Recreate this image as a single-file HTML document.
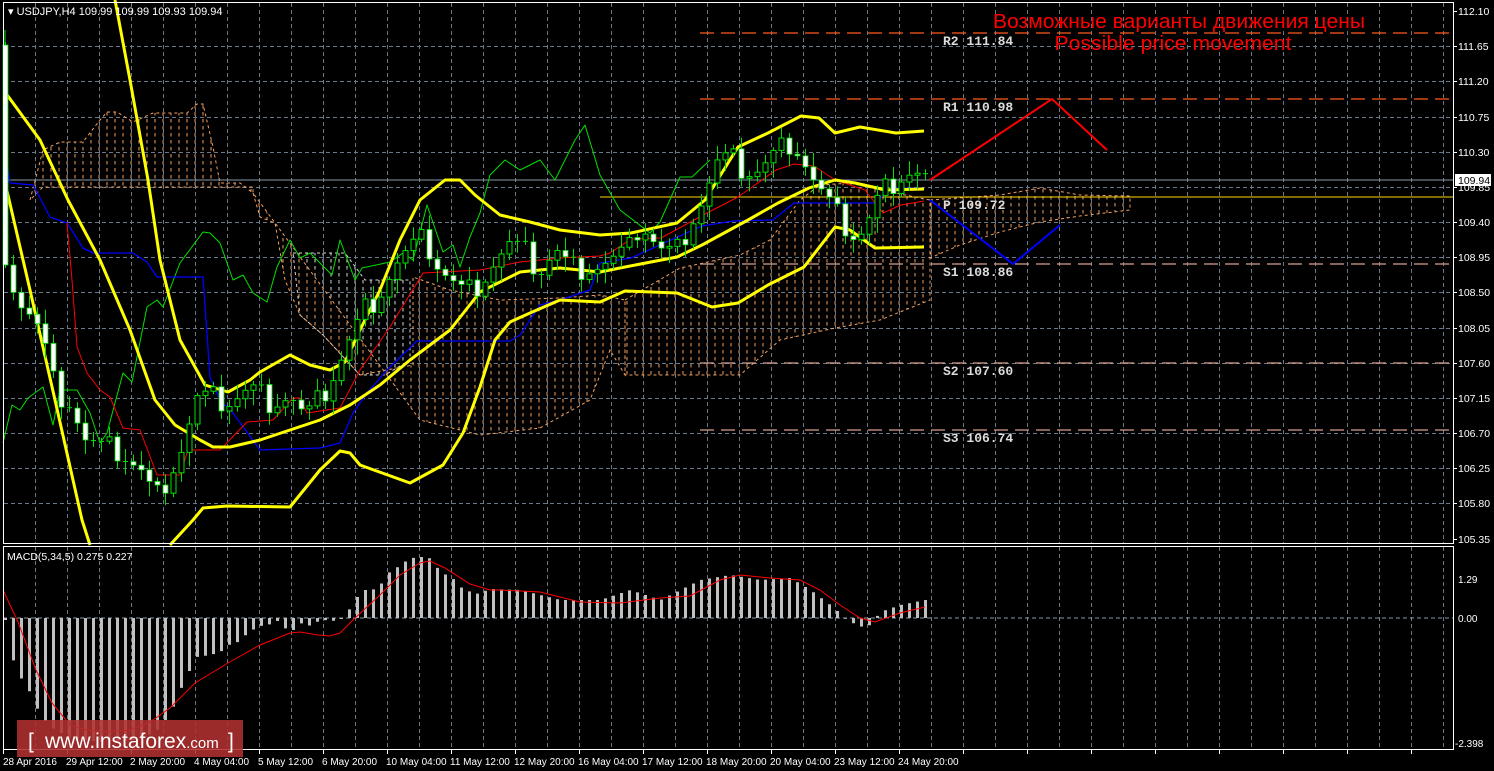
<!DOCTYPE html>
<html><head><meta charset="utf-8"><style>
html,body{margin:0;padding:0;background:#000;width:1494px;height:771px;overflow:hidden}
svg{display:block}
text{font-family:"Liberation Sans",sans-serif}
text.mono{font-family:"Liberation Mono",monospace}
</style></head><body>
<svg id="s" width="1494" height="771" viewBox="0 0 1494 771" xmlns="http://www.w3.org/2000/svg">
<defs>
<pattern id="ho" width="8" height="7" patternUnits="userSpaceOnUse"><line x1="3" y1="0" x2="3" y2="3.5" stroke="#f0a060" stroke-width="1"/></pattern>
<pattern id="hw" width="8" height="7" patternUnits="userSpaceOnUse"><line x1="3" y1="0" x2="3" y2="3.5" stroke="#d8d8d8" stroke-width="1"/></pattern>
</defs>
<rect width="1494" height="771" fill="#000"/>
<g id="grid" stroke="#6b7888" stroke-width="1" stroke-dasharray="4,3"></g>
<g stroke-dasharray="3,3" stroke-width="1">
<polygon fill="url(#ho)" stroke="#f0a060" points="30,200 43,150 60,142 83,142 100,120 107,112 117,112 133,122 153,113 187,113 197,104 203,104 213,147 220,183 240,183 253,193 253,187 43,187"/>
<polygon fill="url(#hw)" stroke="#d8d8d8" points="293,253 345,253 365,280 410,280 410,360 385,375 360,375 323,335 300,315"/>
<polygon fill="url(#ho)" stroke="#f0a060" points="253,193 260,217 275,223 285,280 300,315 323,335 360,375 413,365 413,277 450,290 500,300 560,298 600,295 625,300 625,375 610,350 590,400 540,428 480,435 440,425 420,420"/>
<polygon fill="url(#ho)" stroke="#f0a060" points="625,300 680,268 740,255 770,240 800,200 820,185 850,183 880,190 930,200 930,300 880,320 835,328 780,340 740,375 625,375"/>
<polygon fill="url(#ho)" stroke="#f0a060" points="930,200 1000,195 1040,188 1080,195 1130,196 1130,210 1080,216 1040,222 1000,232 960,245 930,258"/>
</g>
<g stroke-width="1.3" stroke-dasharray="14,7">
<line x1="700" y1="33" x2="1453" y2="33" stroke="#ff5a1e"/>
<line x1="700" y1="99" x2="1453" y2="99" stroke="#ff5a1e"/>
<line x1="700" y1="264" x2="1453" y2="264" stroke="#d8a090"/>
<line x1="700" y1="363" x2="1453" y2="363" stroke="#d8a090"/>
<line x1="700" y1="430" x2="1453" y2="430" stroke="#d8a090"/>
</g>
<line x1="3" y1="180" x2="1453" y2="180" stroke="#8898a8" stroke-width="1"/>
<line x1="600" y1="197" x2="1453" y2="197" stroke="#ffd700" stroke-width="1"/>
<g font-size="13" fill="#dcdcdc" font-weight="bold">
<text class="mono" x="943" y="45">R2 111.84</text>
<text class="mono" x="943" y="111">R1 110.98</text>
<text class="mono" x="943" y="209">P 109.72</text>
<text class="mono" x="943" y="276">S1 108.86</text>
<text class="mono" x="943" y="375">S2 107.60</text>
<text class="mono" x="943" y="442">S3 106.74</text>
</g>
<g fill="none" stroke-linejoin="round">
<polyline stroke="#00e000" stroke-width="1" points="3,443 12,405 20,410 28,398 43,387 53,425 60,390 77,390 90,413 100,443 107,433 123,373 132,382 147,307 157,300 163,307 180,263 203,232 210,233 220,243 233,280 243,275 253,293 267,302 277,267 290,240 300,258 310,253 332,275 340,240 355,280 362,268 390,262 403,253 413,260 427,205 443,252 453,245 460,267 470,237 480,213 490,175 505,160 520,170 540,160 555,180 575,140 585,125 600,175 620,210 650,233 660,222 680,177 692,177 710,160"/>
<polyline stroke="#00e000" stroke-width="1" points="5,30 5,45"/>
<polyline stroke="#0000ff" stroke-width="1.3" points="5,150 10,183 33,185 50,217 67,223 83,248 93,253 133,253 147,262 157,277 203,277 210,377 220,400 233,413 260,450 320,448 340,443 353,413 367,393 387,370 417,341 480,341 510,341 520,335 540,305 560,300 590,290 600,263 631,258 702,226 733,221 773,220 794,203 875,203 891,188 924,188"/>
<polyline stroke="#ff0000" stroke-width="1" points="67,223 72,280 77,347 87,373 100,390 110,397 123,428 140,430 157,475 180,475 188,450 220,450 247,422 273,420 293,398 300,398 307,413 340,408 360,370 390,327 423,273 480,270 520,262 560,258 600,256 610,253 631,239 661,238 707,213 738,197 776,170 794,164 814,166 835,180 865,190 883,213 901,205 924,201"/>
<polyline stroke="#ffff00" stroke-width="3" points="115,0 130,80 148,180 160,260 180,340 205,385 228,392 250,380 260,372 290,355 310,365 330,370 345,362 360,330 380,290 400,240 420,200 445,180 460,180 475,195 500,215 530,222 560,230 600,235 631,233 677,223 705,200 738,147 768,133 801,116 819,118 835,133 860,127 896,133 924,131"/>
<polyline stroke="#ffff00" stroke-width="3" points="5,92 40,140 68,200 100,260 130,330 155,400 175,425 200,440 213,447 230,447 260,440 290,430 320,420 350,405 380,385 410,360 450,330 480,292 520,272 560,268 600,272 625,267 677,257 702,245 748,220 778,203 809,188 835,180 855,183 886,190 924,189"/>
<polyline stroke="#ffff00" stroke-width="3" points="4,178 30,290 55,400 82,520 90,545"/>
<polyline stroke="#ffff00" stroke-width="3" points="170,545 193,520 203,508 227,506 290,507 320,470 340,451 350,453 360,465 410,483 443,465 463,433 480,387 495,340 510,322 530,313 560,300 600,302 625,291 677,293 712,307 738,303 768,285 804,267 835,227 850,230 875,248 924,247"/>
</g>
<g id="candles"></g>
<polyline fill="none" stroke="#ff0000" stroke-width="2" points="930,180 1052,99 1107,150"/>
<polyline fill="none" stroke="#0000ff" stroke-width="2" points="930,200 1013,264 1060,225"/>
<text x="1179" y="28" font-size="20" fill="#ff0000" text-anchor="middle" textLength="372" lengthAdjust="spacingAndGlyphs">Возможные варианты движения цены</text>
<text x="1173" y="50" font-size="20" fill="#ff0000" text-anchor="middle" textLength="237" lengthAdjust="spacingAndGlyphs">Possible price movement</text>
<line x1="3" y1="618" x2="1453" y2="618" stroke="#8898a8" stroke-dasharray="4,3"/>
<g id="macd"></g>
<polyline fill="none" stroke="#ff0000" stroke-width="1" points="3,590 18,622 36,670 52,703 70,725 78,728 100,732 130,730 150,722 170,708 195,683 228,663 260,645 290,633 300,632 318,635 330,636 340,633 355,618 380,595 400,575 420,563 430,561 445,568 470,584 490,590 500,590 540,592 580,602 620,603 660,598 690,596 720,580 740,575 770,578 800,580 820,590 840,605 860,618 875,622 900,613 925,607"/>
<g stroke="#fff" stroke-width="1" fill="none">
<rect x="3.5" y="2.5" width="1450" height="541"/>
<rect x="3.5" y="546.5" width="1450" height="203"/>
</g>
<g id="axis" font-size="10.5" fill="#fff"></g>
<rect x="1455" y="174" width="36" height="12" fill="#fff"/>
<text x="1458" y="184" font-size="10.5" fill="#000">109.94</text>
<text x="1458" y="583" font-size="10" fill="#fff">1.29</text>
<text x="1458" y="622" font-size="10" fill="#fff">0.00</text>
<text x="1455" y="747" font-size="10" fill="#fff">-2.398</text>
<text x="8" y="15" font-size="11" fill="#fff">▾ USDJPY,H4  109.99 109.99 109.93 109.94</text>
<text x="7" y="560" font-size="10.5" fill="#fff">MACD(5,34,5) 0.275 0.227</text>
<g font-size="10" fill="#fff">
<text x="3" y="765">28 Apr 2016</text><text x="66" y="765">29 Apr 12:00</text><text x="130" y="765">2 May 20:00</text><text x="194" y="765">4 May 04:00</text><text x="258" y="765">5 May 12:00</text><text x="322" y="765">6 May 20:00</text><text x="386" y="765">10 May 04:00</text><text x="450" y="765">11 May 12:00</text><text x="514" y="765">12 May 20:00</text><text x="578" y="765">16 May 04:00</text><text x="642" y="765">17 May 12:00</text><text x="706" y="765">18 May 20:00</text><text x="770" y="765">20 May 04:00</text><text x="834" y="765">23 May 12:00</text><text x="898" y="765">24 May 20:00</text>
</g>
<g id="ticks" stroke="#fff"></g>
<rect x="17" y="720" width="226" height="37" fill="#b03030" fill-opacity="0.88"/>
<text x="28" y="748" font-size="21" fill="#fff">[</text>
<text x="45" y="748" font-size="21" fill="#fff">www.instaforex<tspan font-size="15">.com</tspan></text>
<text x="228" y="748" font-size="21" fill="#fff">]</text>
</svg>
<script>
(function(){
var NS="http://www.w3.org/2000/svg";
function el(p,t,a){var e=document.createElementNS(NS,t);for(var k in a)e.setAttribute(k,a[k]);p.appendChild(e);return e;}
function interp(P,x){if(x<=P[0][0])return P[0][1];for(var i=1;i<P.length;i++){if(x<=P[i][0]){var a=P[i-1],b=P[i];return a[1]+(b[1]-a[1])*(x-a[0])/(b[0]-a[0]);}}return P[P.length-1][1];}
var g=document.getElementById('grid');
for(var x=35;x<1453;x+=32){el(g,'line',{x1:x+.5,y1:3,x2:x+.5,y2:543});el(g,'line',{x1:x+.5,y1:547,x2:x+.5,y2:749});}
var ax=document.getElementById('axis');
var tk=document.getElementById('ticks');
var labs=["112.10","111.65","111.20","110.75","110.30","109.85","109.40","108.95","108.50","108.05","107.60","107.15","106.70","106.25","105.80","105.35"];
for(var i=0;i<16;i++){var y=Math.round(11+35.17*i);if(i>0&&i<15)el(g,'line',{x1:4,y1:y+.5,x2:1453,y2:y+.5});el(tk,'line',{x1:1453,y1:y+.5,x2:1457,y2:y+.5});var t=el(ax,'text',{x:1458,y:y+4});t.textContent=labs[i];}
for(var x=3;x<1453;x+=64)el(tk,'line',{x1:x+.5,y1:750,x2:x+.5,y2:754});
var C=[[5,260],[20,300],[35,320],[45,350],[55,390],[70,400],[85,440],[100,450],[120,450],[140,470],[155,500],[170,470],[185,440],[195,400],[210,400],[230,400],[250,390],[270,400],[290,395],[305,420],[320,400],[335,370],[350,340],[365,310],[380,290],[395,265],[410,250],[425,240],[435,260],[450,280],[465,295],[480,280],[495,260],[510,245],[525,255],[540,270],[555,250],[570,270],[585,265],[600,265],[615,260],[630,250],[640,220],[650,235],[660,250],[675,255],[690,220],[705,195],[715,165],[730,160],[745,170],[760,170],[775,155],[790,140],[800,150],[810,175],[825,200],[835,215],[845,225],[855,235],[865,230],[875,205],[885,190],[895,178],[905,170],[915,172],[925,178]];
var cg=document.getElementById('candles');
var prev=45;
for(var i=0;i<116;i++){var x=5+8*i;if(x>926)break;
var c=interp(C,x)+(((i*37)%13)-6)*2.2;if(i==0)c=265;
var o=prev;var tp=Math.min(o,c),bt=Math.max(o,c);
var hi=tp-(3+(i*7)%12),lo=bt+(3+(i*5)%13);
el(cg,'line',{x1:x+.5,y1:hi,x2:x+.5,y2:lo,stroke:'#00e000','stroke-width':1});
if(bt-tp<1.5){el(cg,'line',{x1:x-2,y1:tp+.5,x2:x+3,y2:tp+.5,stroke:'#00e000'});}
else if(c>o){el(cg,'rect',{x:x-2,y:tp,width:5,height:bt-tp,fill:'#fff',stroke:'#00e000','stroke-width':0.8});}
else{el(cg,'rect',{x:x-2,y:tp,width:5,height:bt-tp,fill:'#000',stroke:'#00e000','stroke-width':1});}
prev=c;}
var M=[[5,620],[12,658],[20,677],[28,689],[36,707],[44,720],[52,728],[70,738],[100,742],[140,740],[160,728],[172,709],[180,690],[188,673],[196,657],[210,655],[220,652],[228,645],[236,643],[244,636],[252,630],[260,626],[268,625],[276,620],[284,628],[292,631],[300,623],[308,626],[316,622],[324,620],[332,621],[340,619],[348,611],[356,598],[364,590],[372,590],[380,585],[388,573],[396,568],[404,562],[412,558],[420,557],[428,557],[436,567],[444,574],[452,578],[460,587],[468,591],[476,594],[484,591],[492,589],[520,590],[560,600],[600,600],[630,590],[660,600],[700,580],[730,575],[760,580],[790,578],[810,590],[830,605],[850,622],[862,627],[870,625],[880,612],[900,605],[925,600]];
var mg=document.getElementById('macd');
for(var i=0;i<116;i++){var x=5+8*i;if(x>926)break;var y=interp(M,x);
el(mg,'rect',{x:x-1,y:Math.min(y,618),width:3,height:Math.max(1,Math.abs(y-618)),fill:'#c0c0c0'});}
})();
</script>
</body></html>
